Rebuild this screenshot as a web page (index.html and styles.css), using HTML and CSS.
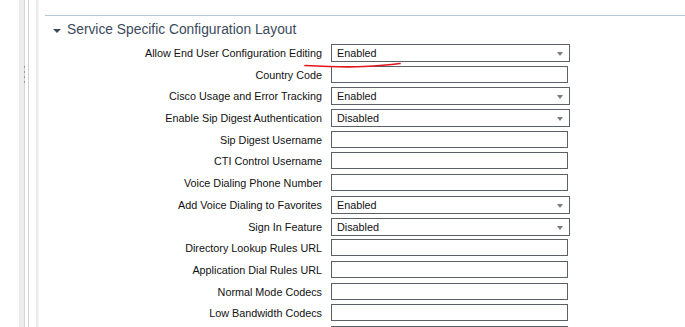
FILE: index.html
```html
<!DOCTYPE html>
<html lang="en">
  <head>
    <meta charset="UTF-8" />
    <title>Service Specific Configuration Layout</title>
    <link rel="stylesheet" href="styles.css">
  </head>
  <body>
    <div class="page">
      <div class="splitter">
        <div class="band"><div class="dots"></div></div>
        <div class="rule"></div>
        <div class="grip"></div>
        <div class="shade"></div>
      </div>

      <div class="main">
        <h2 class="section-title"><span class="caret"></span>Service Specific Configuration Layout</h2>

        <div class="form">
          <label>Allow End User Configuration Editing</label>
          <div class="select">Enabled<span class="arrow"></span></div>

          <label>Country Code</label>
          <input type="text" class="field">

          <label>Cisco Usage and Error Tracking</label>
          <div class="select">Enabled<span class="arrow"></span></div>

          <label>Enable Sip Digest Authentication</label>
          <div class="select">Disabled<span class="arrow"></span></div>

          <label>Sip Digest Username</label>
          <input type="text" class="field">

          <label>CTI Control Username</label>
          <input type="text" class="field">

          <label>Voice Dialing Phone Number</label>
          <input type="text" class="field">

          <label>Add Voice Dialing to Favorites</label>
          <div class="select">Enabled<span class="arrow"></span></div>

          <label>Sign In Feature</label>
          <div class="select">Disabled<span class="arrow"></span></div>

          <label>Directory Lookup Rules URL</label>
          <input type="text" class="field">

          <label>Application Dial Rules URL</label>
          <input type="text" class="field">

          <label>Normal Mode Codecs</label>
          <input type="text" class="field">

          <label>Low Bandwidth Codecs</label>
          <input type="text" class="field">

          <label></label>
          <input type="text" class="field">
        </div>

        <!-- hand-drawn red mark under the first setting -->
        <svg class="scribble" width="110" height="12" viewBox="0 0 110 12">
          <path d="M1 6.5 C 20 7.5, 40 8.5, 60 7.5 S 88 5.5, 96 4.5" fill="none" stroke="#e3141c" stroke-width="1.7" stroke-linecap="round"/>
        </svg>
      </div>
    </div>
  </body>
</html>
```

FILE: styles.css
```css
html, body {
  margin: 0;
  padding: 0;
  height: 327px;
  overflow: hidden;
}
body {
  background-color: #fff;
  font-family: 'Liberation Sans', Arial, sans-serif;
}
.page {
  display: flex;
  height: 327px;
  overflow: hidden;
}
.splitter {
  width: 45px;
  flex-shrink: 0;
  display: flex;
  padding-left: 19px;
  box-sizing: border-box;
}
.band {
  position: relative;
  width: 5px;
  background-color: #ededed;
  border-right: 1px solid #d6d6d6;
}
.dots {
  position: absolute;
  right: -1px;
  top: 66px;
  width: 1px;
  height: 18px;
  background: repeating-linear-gradient(to bottom, #9a9a9a 0 2px, transparent 2px 5px);
}
.rule {
  width: 3px;
  border-right: 1px solid #cfcfcf;
}
.grip {
  width: 7px;
}
.shade {
  width: 3px;
  background: linear-gradient(to right, #e4e4e4, #f7f7f7);
}
.main {
  position: relative;
  flex: 1;
  margin-top: 15px;
  border-top: 1px solid #b9cad6;
}
.section-title {
  margin: 0;
  padding: 4px 0 0 8px;
  height: 24px;
  font-size: 13.8px;
  font-weight: normal;
  color: #3b4a5b;
  display: flex;
  align-items: flex-start;
  line-height: 20px;
}
.caret {
  width: 0;
  height: 0;
  border-left: 4px solid transparent;
  border-right: 4px solid transparent;
  border-top: 4px solid #3b4a5b;
  margin-right: 6px;
  margin-top: 9px;
}
.form {
  display: grid;
  grid-template-columns: 277px 239px;
  grid-auto-rows: 21.7px;
  column-gap: 9px;
  align-items: start;
}
.form label {
  text-align: right;
  font-size: 10.8px;
  color: #111;
  line-height: 18px;
  white-space: nowrap;
}
.select {
  position: relative;
  box-sizing: border-box;
  height: 18px;
  width: 239px;
  border: 1px solid #5b6166;
  padding-left: 5px;
  font-size: 10.8px;
  line-height: 16px;
  color: #111;
}
.arrow {
  position: absolute;
  right: 6px;
  top: 7px;
  width: 0;
  height: 0;
  border-left: 3px solid transparent;
  border-right: 3px solid transparent;
  border-top: 4px solid #7a7a7a;
}
.field {
  box-sizing: border-box;
  height: 17px;
  width: 237px;
  margin: 0;
  padding: 0 4px;
  border: 1px solid #5b6166;
  border-radius: 0;
  font-family: inherit;
  font-size: 11px;
  outline: none;
}
.scribble {
  position: absolute;
  left: 259px;
  top: 43px;
}
```
